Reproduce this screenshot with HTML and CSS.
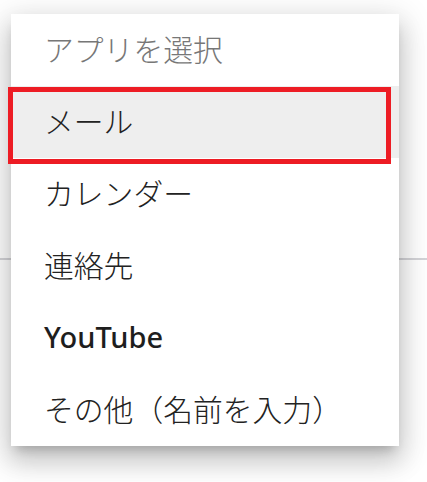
FILE: index.html
```html
<!DOCTYPE html>
<html lang="ja">
<head>
	<meta charset="UTF-8">
	<title>アプリを選択</title>
	<link rel="stylesheet" href="styles.css">
</head>
<body>
	<div id="page">
		<div class="divider"></div>

		<ul class="menu">
			<li class="menu-title">アプリを選択</li>
			<li class="menu-item selected">メール</li>
			<li class="menu-item">カレンダー</li>
			<li class="menu-item">連絡先</li>
			<li class="menu-item bold">YouTube</li>
			<li class="menu-item">その他（名前を入力）</li>
		</ul>
	</div>
</body>
</html>
```

FILE: styles.css
```css
*{
	margin: 0;
	padding: 0;
	box-sizing: border-box;
}
body{
	background: #fff;
	font-family: "Noto Sans CJK JP", "Noto Sans", sans-serif;
}
#page{
	position: relative;
	width: 427px;
	height: 482px;
	overflow: hidden;
	padding-top: 258px;
}
/*背景の区切り線*/
.divider{
	height: 2px;
	background: #d4d4d8;
}
/*メニュー*/
.menu{
	position: absolute;
	left: 11px;
	top: 14px;
	width: 388px;
	background: #fff;
	list-style: none;
	box-shadow: 0 8px 10px -5px rgba(0,0,0,0.2),
		0 16px 24px 2px rgba(0,0,0,0.14),
		0 6px 30px 5px rgba(0,0,0,0.12);
}
.menu li{
	display: flex;
	align-items: center;
	height: 72px;
	padding: 0 0 4px 33px;
	font-size: 29.8px;
	font-weight: 300;
	color: #222;
	position: relative;
}
.menu .menu-title{
	color: #777;
}
.menu .bold{
	font-family: "Noto Sans", sans-serif;
	font-size: 29px;
	font-weight: 500;
	color: #1e1e1e;
}
.selected{
	background: #eeeeee;
}
/*赤い枠*/
.selected::after{
	content: "";
	position: absolute;
	left: -3px;
	top: 1px;
	right: 8px;
	bottom: -6px;
	border: 5px solid #ed1c24;
}
```
